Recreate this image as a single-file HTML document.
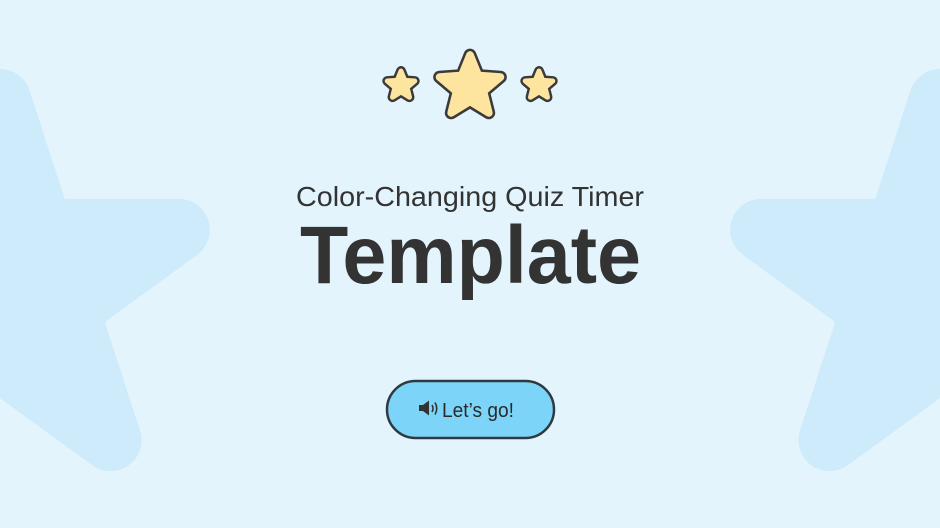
<!DOCTYPE html>
<html><head><meta charset="utf-8"><style>
html,body{margin:0;padding:0;width:940px;height:528px;overflow:hidden;background:#e3f4fd;}
svg{display:block}
</style></head><body>
<svg width="940" height="528" viewBox="0 0 940 528" xmlns="http://www.w3.org/2000/svg">
<defs>
<polygon id="reg" points="0,-1 0.2245,-0.309 0.951,-0.309 0.363,0.118 0.588,0.809 0,0.382 -0.588,0.809 -0.363,0.118 -0.951,-0.309 -0.2245,-0.309"/>
<polygon id="fat" points="0,-1 0.26,-0.36 0.951,-0.309 0.42,0.14 0.588,0.809 0,0.45 -0.588,0.809 -0.42,0.14 -0.951,-0.309 -0.26,-0.36"/>
</defs>
<g fill="#cdebfb" stroke="#cdebfb" stroke-linejoin="round">
<use href="#reg" transform="translate(0,288) scale(188)" stroke-width="0.33"/>
<use href="#reg" transform="translate(940,288) scale(188)" stroke-width="0.33"/>
</g>
<g stroke-linejoin="round">
<use href="#fat" transform="translate(470,87) scale(32)" fill="#3a3a3a" stroke="#3a3a3a" stroke-width="0.4"/>
<use href="#fat" transform="translate(470,87) scale(32)" fill="#fde59f" stroke="#fde59f" stroke-width="0.24"/>
<use href="#fat" transform="translate(401,85.5) scale(14.5)" fill="#3a3a3a" stroke="#3a3a3a" stroke-width="0.68"/>
<use href="#fat" transform="translate(401,85.5) scale(14.5)" fill="#fde59f" stroke="#fde59f" stroke-width="0.34"/>
<use href="#fat" transform="translate(539,85.5) scale(14.5)" fill="#3a3a3a" stroke="#3a3a3a" stroke-width="0.68"/>
<use href="#fat" transform="translate(539,85.5) scale(14.5)" fill="#fde59f" stroke="#fde59f" stroke-width="0.34"/>
</g>
<text x="296" y="206" font-family="Liberation Sans, sans-serif" font-size="28" fill="#333" textLength="348" lengthAdjust="spacingAndGlyphs">Color-Changing Quiz Timer</text>
<text x="300" y="283" font-family="Liberation Sans, sans-serif" font-weight="bold" font-size="82" fill="#333" textLength="341" lengthAdjust="spacingAndGlyphs">Template</text>
<rect x="387" y="381" width="167" height="57" rx="28.5" fill="#7dd4f9" stroke="#2f3a40" stroke-width="2.5"/>
<path d="M419,405 h4 l6,-4.5 v15 l-6,-4.5 h-4 z" fill="#333"/>
<path d="M432,405 q2,3.5 0,7" stroke="#333" stroke-width="1.6" fill="none"/>
<path d="M435,402.5 q3.5,6 0,12" stroke="#333" stroke-width="1.6" fill="none"/>
<text x="442" y="417" font-family="Liberation Sans, sans-serif" font-size="20" fill="#2a2a2a" textLength="72" lengthAdjust="spacingAndGlyphs">Let’s go!</text>
</svg>
</body></html>
